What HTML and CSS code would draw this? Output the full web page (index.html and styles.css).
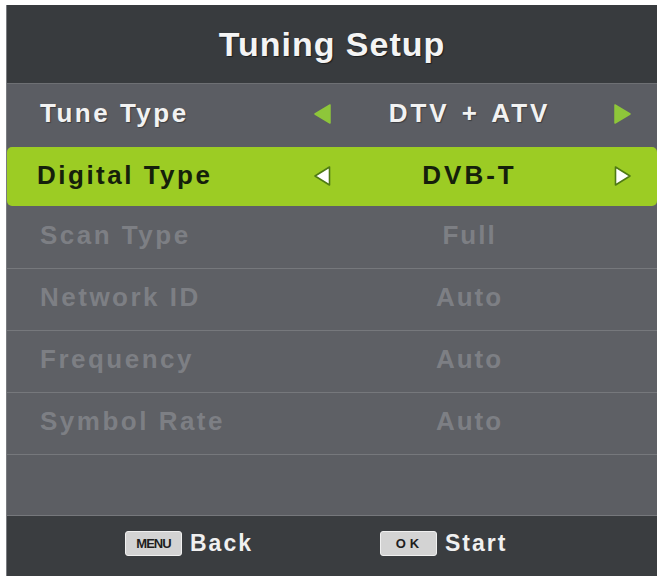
FILE: index.html
```html
<!DOCTYPE html>
<html>
<head>
<meta charset="utf-8">
<link rel="stylesheet" href="styles.css">
</head>
<body>
<div class="panel">
  <div class="header">Tuning Setup</div>
  <div class="row row-first">
    <span class="label">Tune Type</span>
    <svg class="arrow" viewBox="0 0 20 22"><polygon points="18,2 18,20 3,11" fill="#8ec63a" stroke="#8ec63a" stroke-width="1.5" stroke-linejoin="round"/></svg>
    <span class="value">DTV + ATV</span>
    <svg class="arrow" viewBox="0 0 20 22"><polygon points="2,2 2,20 17,11" fill="#8ec63a" stroke="#8ec63a" stroke-width="1.5" stroke-linejoin="round"/></svg>
  </div>
  <div class="row row-active">
    <span class="label">Digital Type</span>
    <svg class="arrow" viewBox="0 0 20 22"><polygon points="17.5,2 17.5,20 3,11" fill="#ffffff" stroke="#4f7a14" stroke-width="1.6" stroke-linejoin="round"/></svg>
    <span class="value">DVB-T</span>
    <svg class="arrow" viewBox="0 0 20 22"><polygon points="2.5,2 2.5,20 17,11" fill="#ffffff" stroke="#4f7a14" stroke-width="1.6" stroke-linejoin="round"/></svg>
  </div>
  <div class="row row-off">
    <span class="label">Scan Type</span>
    <span class="gap"></span>
    <span class="value">Full</span>
  </div>
  <div class="row row-off">
    <span class="label">Network ID</span>
    <span class="gap"></span>
    <span class="value">Auto</span>
  </div>
  <div class="row row-off">
    <span class="label">Frequency</span>
    <span class="gap"></span>
    <span class="value">Auto</span>
  </div>
  <div class="row row-off">
    <span class="label">Symbol Rate</span>
    <span class="gap"></span>
    <span class="value">Auto</span>
  </div>
  <div class="row row-off row-empty"></div>
  <div class="footer">
    <div class="hint"><span class="key key-menu">MENU</span><span class="hint-text">Back</span></div>
    <div class="hint"><span class="key key-ok">OK</span><span class="hint-text">Start</span></div>
  </div>
</div>
</body>
</html>
```
FILE: styles.css
```css
html, body {
  margin: 0;
  padding: 0;
  background: #ffffff;
}
body {
  font-family: "Liberation Sans", Arial, sans-serif;
  font-weight: bold;
}
.panel {
  margin: 5px 2px 0 6px;
  height: 571px;
  background: #5e6065;
  display: flex;
  flex-direction: column;
  border-left: 1px solid #7a7c80;
  box-sizing: border-box;
}
.header {
  height: 78px;
  background: #383b3e;
  color: #f4f4f4;
  font-size: 34px;
  letter-spacing: 1px;
  display: flex;
  align-items: center;
  justify-content: center;
  text-shadow: 1px 1px 1px rgba(0,0,0,0.5);
  border-bottom: 1px solid #6e7074;
}
.row {
  display: grid;
  grid-template-columns: 272px 20px 281px 20px 1fr;
  align-items: center;
  padding-left: 33px;
  font-size: 26px;
  letter-spacing: 2.5px;
  box-sizing: border-box;
  color: #f2f2f2;
  text-shadow: 1px 1px 1px rgba(0,0,0,0.35);
}
.row-first {
  height: 63px;
  background: #5b5d63;
  padding-bottom: 4px;
}
.row-active {
  height: 59px;
  background: #9ccc24;
  border-radius: 5px;
  color: #15200b;
  text-shadow: none;
  padding-left: 30px;
  padding-bottom: 2px;
  grid-template-columns: 275px 20px 281px 20px 1fr;
  margin: 0 0 1px 0;
}
.row-off {
  height: 62px;
  color: #7d7f84;
  text-shadow: none;
  border-bottom: 1px solid #76787c;
  padding-bottom: 4px;
}
.row-empty {
  height: 61px;
  background: #5c5e63;
}
.arrow {
  width: 20px;
  height: 22px;
  display: block;
}
.value {
  text-align: center;
  letter-spacing: 3px;
  word-spacing: 2px;
  padding-right: 6px;
}
.row-off .value {
  letter-spacing: 2px;
}
.footer {
  flex: 1;
  background: #3a3d40;
  display: grid;
  grid-template-columns: 255px auto;
  align-items: center;
  padding-left: 118px;
  padding-bottom: 6px;
}
.hint {
  display: flex;
  align-items: center;
  gap: 6px;
}
.key {
  display: flex;
  align-items: center;
  justify-content: center;
  height: 23px;
  background: #d3d3d3;
  border: 1px solid #f0f0f0;
  border-radius: 3px;
  color: #1e1e1e;
  box-sizing: content-box;
}
.key-menu {
  width: 55px;
  font-size: 13px;
  letter-spacing: -1px;
}
.key-ok {
  width: 53px;
  font-size: 13px;
  letter-spacing: 4px;
  padding-left: 2px;
}
.hint-text {
  color: #f0f0f0;
  font-size: 23px;
  letter-spacing: 2px;
  margin-left: 2px;
}
```
